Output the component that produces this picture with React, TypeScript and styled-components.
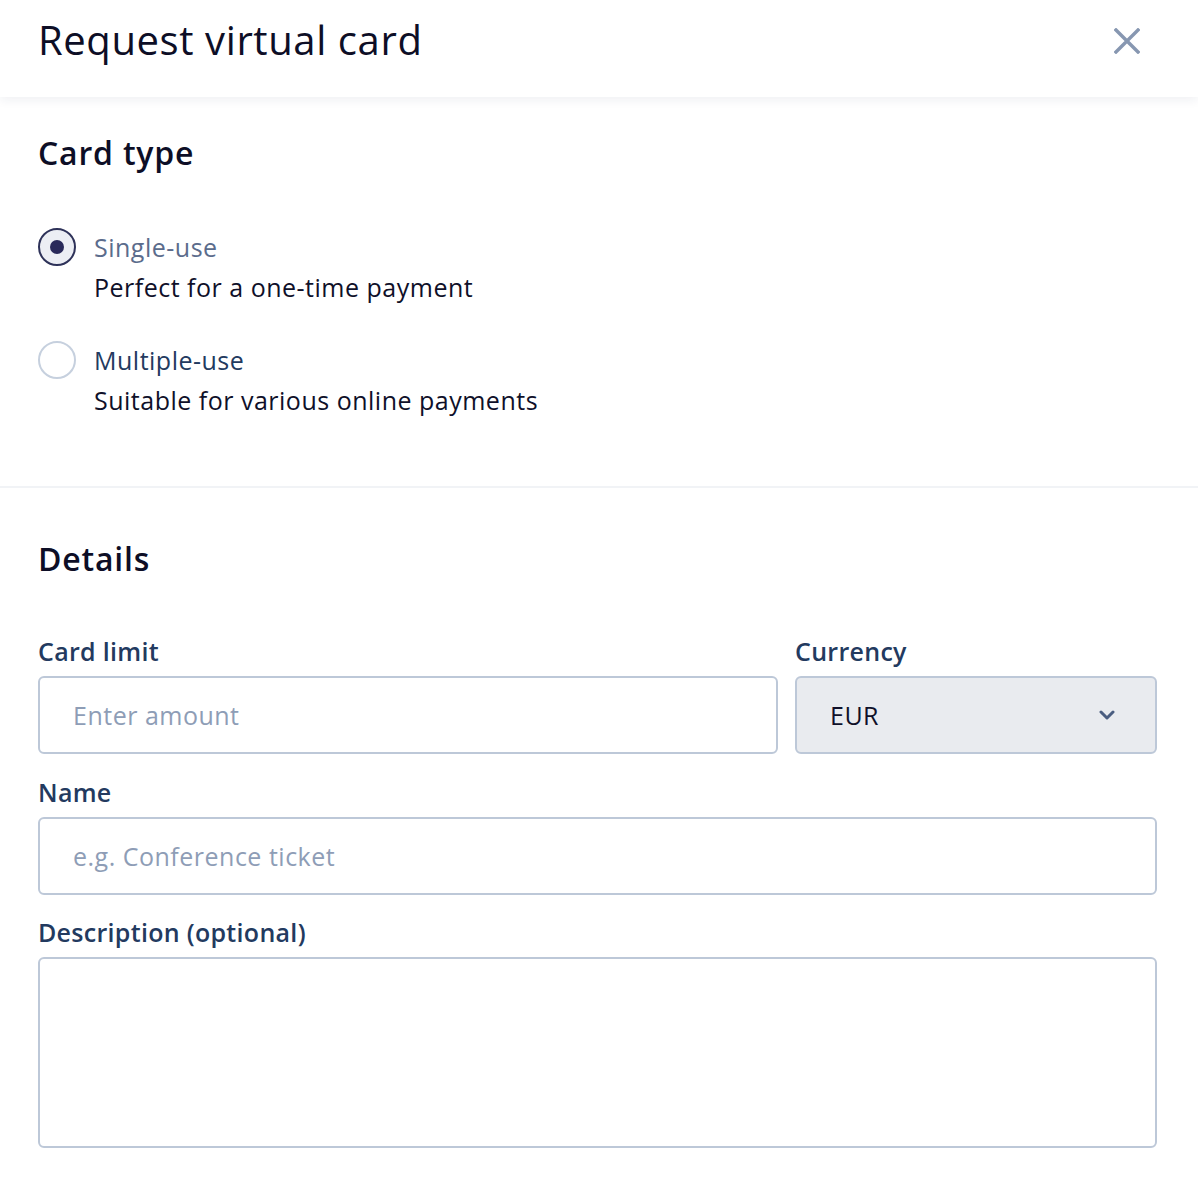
import React from "react";
import styled, { createGlobalStyle } from "styled-components";

const Global = createGlobalStyle`
  html, body { margin: 0; padding: 0; background: #ffffff; }
  body { font-family: "Open Sans", "Lato", sans-serif; color: #0f1029; }
  * { box-sizing: border-box; }
`;

const Page = styled.div`
  width: 1198px;
  min-height: 1198px;
  background: #ffffff;
`;

const Header = styled.header`
  height: 97px;
  display: flex;
  align-items: center;
  justify-content: space-between;
  padding: 0 57px 0 38px;
  background: #ffffff;
  box-shadow: 0 3px 10px rgba(30, 45, 80, 0.07);
  position: relative;
  z-index: 1;
`;

const Title = styled.h1`
  margin: 0;
  font-size: 40px;
  font-weight: 400;
  letter-spacing: 0.6px;
  color: #0d0e26;
  line-height: 48px;
  margin-top: -17px;
`;

const CloseButton = styled.button`
  border: none;
  background: transparent;
  padding: 0;
  width: 28px;
  height: 28px;
  display: flex;
  align-items: center;
  justify-content: center;
  cursor: pointer;
  margin-top: -16px;
`;

const Section = styled.section<{ $top: number; $bottom: number }>`
  padding: ${(p) => p.$top}px 41px ${(p) => p.$bottom}px 38px;
`;

const Divider = styled.hr`
  border: none;
  height: 2px;
  background: #f1f3f6;
  margin: 0;
`;

const SectionTitle = styled.h2`
  margin: 0;
  font-size: 32px;
  font-weight: 600;
  letter-spacing: 0.8px;
  line-height: 36px;
  color: #0d0e26;
`;

const RadioGroup = styled.div`
  display: flex;
  flex-direction: column;
  gap: 33px;
  margin-top: 56px;
`;

const RadioRow = styled.label`
  display: grid;
  grid-template-columns: 38px 1fr;
  column-gap: 18px;
  align-items: center;
  cursor: pointer;
`;

const RadioCircle = styled.span<{ $checked: boolean }>`
  width: 38px;
  height: 38px;
  border-radius: 50%;
  border: 2px solid ${(p) => (p.$checked ? "#2e3259" : "#c6d0de")};
  background: ${(p) => (p.$checked ? "#eceef4" : "#ffffff")};
  display: flex;
  align-items: center;
  justify-content: center;
  &::after {
    content: "";
    display: ${(p) => (p.$checked ? "block" : "none")};
    width: 14px;
    height: 14px;
    border-radius: 50%;
    background: #29295a;
  }
`;

const RadioLabel = styled.span<{ $checked: boolean }>`
  font-size: 25px;
  letter-spacing: 0.5px;
  line-height: 40px;
  color: ${(p) => (p.$checked ? "#5b6c8c" : "#233a5f")};
`;

const RadioDesc = styled.span`
  grid-column: 2;
  font-size: 25px;
  letter-spacing: 0.5px;
  line-height: 40px;
  color: #0f1029;
`;

const FieldRow = styled.div`
  display: grid;
  grid-template-columns: 740px 1fr;
  column-gap: 17px;
  margin-top: 59px;
`;

const Field = styled.div<{ $mt?: number }>`
  display: flex;
  flex-direction: column;
  margin-top: ${(p) => p.$mt ?? 0}px;
`;

const FieldLabel = styled.label`
  font-size: 25px;
  font-weight: 600;
  letter-spacing: 0.3px;
  line-height: 30px;
  color: #233a5f;
  margin-bottom: 10px;
`;

const Input = styled.input`
  height: 78px;
  width: 100%;
  border: 2px solid #bdc8d8;
  border-radius: 6px;
  padding: 0 33px;
  font-family: inherit;
  font-size: 25px;
  letter-spacing: 0.5px;
  color: #0f1029;
  background: #ffffff;
  outline: none;
  &::placeholder { color: #8e9db6; }
`;

const SelectBox = styled.div`
  height: 78px;
  border: 2px solid #bdc8d8;
  border-radius: 6px;
  background: #e9ebef;
  display: flex;
  align-items: center;
  justify-content: space-between;
  padding: 0 40px 0 33px;
  font-size: 25px;
  letter-spacing: 0.5px;
  color: #0f1029;
`;

const TextArea = styled.textarea`
  height: 191px;
  width: 100%;
  border: 2px solid #bdc8d8;
  border-radius: 6px;
  padding: 20px 33px;
  font-family: inherit;
  font-size: 25px;
  resize: none;
  outline: none;
  background: #ffffff;
`;

const options = [
  { id: "single", label: "Single-use", desc: "Perfect for a one-time payment", checked: true },
  { id: "multi", label: "Multiple-use", desc: "Suitable for various online payments", checked: false },
];

export default function App() {
  return (
    <Page>
      <Global />
      <Header>
        <Title>Request virtual card</Title>
        <CloseButton aria-label="Close">
          <svg width="26" height="26" viewBox="0 0 26 26">
            <path d="M2 2 L24 24 M24 2 L2 24" stroke="#8797b1" strokeWidth="3.4" strokeLinecap="square" />
          </svg>
        </CloseButton>
      </Header>

      <Section $top={38} $bottom={66}>
        <SectionTitle>Card type</SectionTitle>
        <RadioGroup>
          {options.map((o) => (
            <RadioRow key={o.id}>
              <RadioCircle $checked={o.checked} />
              <RadioLabel $checked={o.checked}>{o.label}</RadioLabel>
              <RadioDesc>{o.desc}</RadioDesc>
            </RadioRow>
          ))}
        </RadioGroup>
      </Section>

      <Divider />

      <Section $top={53} $bottom={40}>
        <SectionTitle>Details</SectionTitle>
        <FieldRow>
          <Field>
            <FieldLabel>Card limit</FieldLabel>
            <Input placeholder="Enter amount" />
          </Field>
          <Field>
            <FieldLabel>Currency</FieldLabel>
            <SelectBox>
              <span>EUR</span>
              <svg width="16" height="12" viewBox="0 0 16 12">
                <path d="M2 3 L8 9 L14 3" stroke="#4a5d80" strokeWidth="3" fill="none" strokeLinecap="round" strokeLinejoin="round" />
              </svg>
            </SelectBox>
          </Field>
        </FieldRow>
        <Field $mt={23}>
          <FieldLabel>Name</FieldLabel>
          <Input placeholder="e.g. Conference ticket" />
        </Field>
        <Field $mt={22}>
          <FieldLabel>Description (optional)</FieldLabel>
          <TextArea />
        </Field>
      </Section>
    </Page>
  );
}
